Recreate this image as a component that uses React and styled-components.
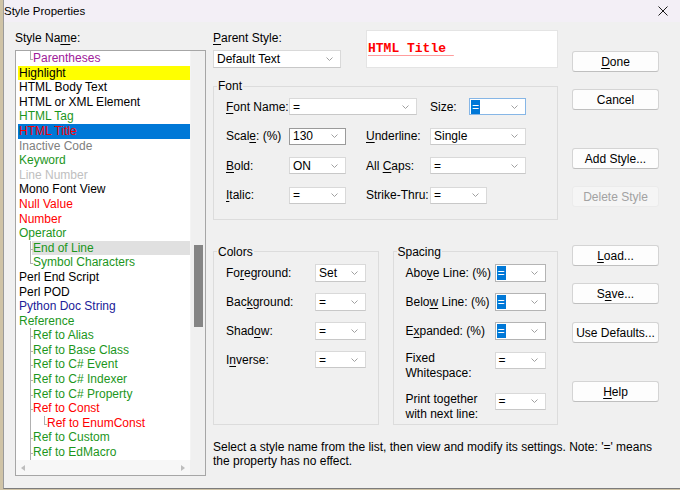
import styled, { createGlobalStyle } from "styled-components";

const GREEN = "#1c961c";
const RED = "#ff0000";
const PURPLE = "#a0209a";
const NAVY = "#202098";

const GlobalStyle = createGlobalStyle`
  html, body {
    margin: 0;
    padding: 0;
    background: #cfc3a6;
  }
  body {
    font-family: "Liberation Sans", Arial, sans-serif;
    font-size: 12px;
    color: #000;
  }
`;

const Window = styled.div`
  margin-left: 3px;
  width: 677px;
  height: 489px;
  box-sizing: border-box;
  border-left: 1px solid #9a9a9a;
  border-bottom: 1px solid #7c7c7c;
  background: #f0f0f0;
  display: flex;
  flex-direction: column;
`;

const TitleBar = styled.div`
  height: 22px;
  flex: none;
  background: #f3eff6;
  display: flex;
  align-items: center;
  font-size: 11.5px;
`;

const Close = styled.div`
  margin-left: auto;
  width: 34px;
  height: 22px;
  display: flex;
  align-items: center;
  justify-content: center;
`;

const Body = styled.div`
  flex: 1;
  display: flex;
  padding: 8px 21px 0 11px;
`;

const LeftCol = styled.div`
  width: 191px;
  flex: none;
  display: flex;
  flex-direction: column;
`;

const Caption = styled.div`
  line-height: 16px;
  height: 16px;
`;

const ListBox = styled.div`
  margin-top: 4px;
  height: 426px;
  box-sizing: border-box;
  border: 1px solid #a6a6a6;
  background: #fff;
  display: grid;
  grid-template-columns: 1fr 15px;
  grid-template-rows: 1fr 15px;
  overflow: hidden;
`;

const Rows = styled.div`
  overflow: hidden;
`;

const Row = styled.div`
  position: relative;
  height: 14.6px;
  padding-left: ${(p) => 2 + p.$level * 14}px;
`;

const RowLabel = styled.div`
  height: 100%;
  line-height: 14.6px;
  padding-left: 1px;
  white-space: nowrap;
  color: ${(p) => p.$color};
  background: ${(p) => p.$bg};
`;

const VLine = styled.span`
  position: absolute;
  left: ${(p) => p.$x}px;
  top: 0;
  width: 1px;
  height: ${(p) => (p.$half ? "55%" : "100%")};
  background: #b0b0b0;
`;

const HLine = styled.span`
  position: absolute;
  left: ${(p) => p.$x}px;
  top: 55%;
  width: 3px;
  height: 1px;
  background: #b0b0b0;
`;

const VScroll = styled.div`
  background: #f0f0f0;
  border-left: 1px solid #f4f4f4;
`;

const Thumb = styled.div`
  margin: 194px 0 0 3px;
  width: 9px;
  height: 82px;
  background: #858585;
`;

const HScroll = styled.div`
  background: #f7f7f7;
  display: flex;
  align-items: center;
  justify-content: space-between;
  padding: 0 5px;
`;

const Corner = styled.div`
  background: #f0f0f0;
`;

const Arrow = styled.span`
  width: 0;
  height: 0;
  border-top: 3.5px solid transparent;
  border-bottom: 3.5px solid transparent;
  ${(p) =>
    p.$dir === "left"
      ? "border-right: 4px solid #bdbdbd;"
      : "border-left: 4px solid #bdbdbd;"}
`;

const MidCol = styled.div`
  width: 345px;
  flex: none;
  margin-left: 7px;
  display: flex;
  flex-direction: column;
`;

const TopRow = styled.div`
  height: 38px;
  display: flex;
  justify-content: space-between;
`;

const ParentBlock = styled.div`
  display: flex;
  flex-direction: column;
`;

const Preview = styled.div`
  width: 192px;
  height: 38px;
  box-sizing: border-box;
  background: #fff;
  border: 1px solid #e4e4e4;
  padding: 10px 0 0 1px;
  font-family: "Liberation Mono", "Courier New", monospace;
  font-weight: bold;
  font-size: 13px;
  line-height: 16px;
  color: ${RED};
  white-space: pre;
`;

const PreviewText = styled.span`
  text-decoration: underline;
  text-decoration-color: #ff9c9c;
  text-decoration-thickness: 1px;
  text-underline-offset: 3px;
`;

const Group = styled.fieldset`
  margin: ${(p) => p.$mt || 0}px 0 0 0;
  padding: 0;
  border: 1px solid #dcdcdc;
  min-width: 0;
  flex: ${(p) => (p.$grow ? "1" : "none")};
`;

const Legend = styled.legend`
  margin-left: 3px;
  padding: 0 1px;
  line-height: 14px;
`;

const GroupBody = styled.div`
  display: flex;
  flex-direction: column;
  gap: ${(p) => p.$gap}px;
  padding: 5px 0 ${(p) => p.$pb}px 12px;
`;

const FormRow = styled.div`
  display: flex;
  align-items: ${(p) => (p.$top ? "flex-start" : "center")};
  height: ${(p) => p.$h}px;
`;

const Label = styled.span`
  width: ${(p) => p.$w}px;
  margin-left: ${(p) => p.$ml || 0}px;
  flex: none;
  line-height: ${(p) => (p.$multi ? "15px" : "16px")};
  white-space: nowrap;
`;

const Key = styled.u`
  text-decoration-thickness: 1px;
  text-underline-offset: 2px;
`;

const SelectBox = styled.div`
  width: ${(p) => p.$w}px;
  height: ${(p) => p.$h || 17}px;
  margin-top: ${(p) => p.$mt || 0}px;
  flex: none;
  box-sizing: border-box;
  background: #fff;
  border: 1px solid ${(p) => p.$border || "#d9d9d9"};
  border-bottom-color: ${(p) => p.$border || "#c8c8c8"};
  display: flex;
  align-items: center;
  padding: 0 7px 0 ${(p) => (p.$hl ? 1 : 3)}px;
`;

const Value = styled.span`
  flex: 1;
  white-space: nowrap;
  line-height: 14px;
`;

const HlValue = styled.span`
  display: inline-flex;
  align-items: center;
  justify-content: center;
  width: 9px;
  height: 14px;
  vertical-align: top;
  background: #0078d7;
  color: #fff;
`;

const Lower = styled.div`
  margin-top: 25px;
  display: flex;
  gap: 14px;
`;

const Note = styled.div`
  margin-top: 15px;
  line-height: 14px;
  white-space: nowrap;
`;

const RightCol = styled.div`
  width: 87px;
  flex: none;
  margin-left: 14px;
  display: flex;
  flex-direction: column;
`;

const Button = styled.button`
  margin-top: ${(p) => p.$space}px;
  width: 87px;
  height: 21px;
  padding: 0;
  box-sizing: border-box;
  font-family: inherit;
  font-size: 12px;
  color: ${(p) => (p.disabled ? "#a2a2a2" : "#000")};
  background: ${(p) => (p.disabled ? "#f5f5f5" : "#fdfdfd")};
  border: 1px solid ${(p) => (p.disabled ? "#ebebeb" : "#d4d4d4")};
  border-bottom-color: ${(p) => (p.disabled ? "#ebebeb" : "#bfbfbf")};
  border-radius: 3px;
`;

const Chevron = () => (
  <svg width="7" height="4" viewBox="0 0 7 4">
    <polyline points="0.5,0.5 3.5,3.5 6.5,0.5" fill="none" stroke="#a0a0a0" strokeWidth="1" />
  </svg>
);

const Select = ({ w, h, mt, value, hl, border }) => (
  <SelectBox $w={w} $h={h} $mt={mt} $hl={hl} $border={border}>
    <Value>{hl ? <HlValue>=</HlValue> : value}</Value>
    <Chevron />
  </SelectBox>
);

const items = [
  { t: "Parentheses", l: 1, c: PURPLE, last: true },
  { t: "Highlight", bg: "#ffff00" },
  { t: "HTML Body Text" },
  { t: "HTML or XML Element" },
  { t: "HTML Tag", c: GREEN },
  { t: "HTML Title", c: RED, bg: "#0078d7" },
  { t: "Inactive Code", c: "#808080" },
  { t: "Keyword", c: GREEN },
  { t: "Line Number", c: "#c0c0c0" },
  { t: "Mono Font View" },
  { t: "Null Value", c: RED },
  { t: "Number", c: RED },
  { t: "Operator", c: GREEN },
  { t: "End of Line", l: 1, c: GREEN, bg: "#e0e0e0" },
  { t: "Symbol Characters", l: 1, c: GREEN, last: true },
  { t: "Perl End Script" },
  { t: "Perl POD" },
  { t: "Python Doc String", c: NAVY },
  { t: "Reference", c: GREEN },
  { t: "Ref to Alias", l: 1, c: GREEN },
  { t: "Ref to Base Class", l: 1, c: GREEN },
  { t: "Ref to C# Event", l: 1, c: GREEN },
  { t: "Ref to C# Indexer", l: 1, c: GREEN },
  { t: "Ref to C# Property", l: 1, c: GREEN },
  { t: "Ref to Const", l: 1, c: RED },
  { t: "Ref to EnumConst", l: 2, c: RED, last: true, rails: [1] },
  { t: "Ref to Custom", l: 1, c: GREEN },
  { t: "Ref to EdMacro", l: 1, c: GREEN },
];

const StyleList = () => (
  <ListBox>
    <Rows>
      {items.map((it) => {
        const level = it.l || 0;
        return (
          <Row key={it.t} $level={level}>
            {(it.rails || []).map((r) => (
              <VLine key={r} $x={r * 14} />
            ))}
            {level > 0 && <VLine $x={level * 14} $half={it.last} />}
            {level > 0 && <HLine $x={level * 14} />}
            <RowLabel $color={it.c || "#000"} $bg={it.bg || "transparent"}>
              {it.t}
            </RowLabel>
          </Row>
        );
      })}
    </Rows>
    <VScroll>
      <Thumb />
    </VScroll>
    <HScroll>
      <Arrow $dir="left" />
      <Arrow $dir="right" />
    </HScroll>
    <Corner />
  </ListBox>
);

export default function App() {
  return (
    <>
      <GlobalStyle />
      <Window>
        <TitleBar>
          Style Properties
          <Close>
            <svg width="10" height="10" viewBox="0 0 10 10">
              <path d="M0.5 0.5 L9.5 9.5 M9.5 0.5 L0.5 9.5" stroke="#1a1a1a" strokeWidth="1" />
            </svg>
          </Close>
        </TitleBar>
        <Body>
          <LeftCol>
            <Caption>
              Style Na<Key>m</Key>e:
            </Caption>
            <StyleList />
          </LeftCol>

          <MidCol>
            <TopRow>
              <ParentBlock>
                <Caption>
                  <Key>P</Key>arent Style:
                </Caption>
                <Select w={128} h={18} mt={4} value="Default Text" />
              </ParentBlock>
              <Preview>
                <PreviewText>{"HTML Title "}</PreviewText>
              </Preview>
            </TopRow>

            <Group $mt={11}>
              <Legend>Font</Legend>
              <GroupBody $gap={12.5} $pb={15}>
                <FormRow $h={17}>
                  <Label $w={63}>
                    <Key>F</Key>ont Name:
                  </Label>
                  <Select w={128} value="=" />
                  <Label $w={39} $ml={13}>
                    Size:
                  </Label>
                  <Select w={57} hl border="#86b6e6" />
                </FormRow>
                <FormRow $h={17}>
                  <Label $w={63}>
                    Scal<Key>e</Key>: (%)
                  </Label>
                  <Select w={57} value="130" border="#9a9a9a" />
                  <Label $w={64} $ml={20}>
                    <Key>U</Key>nderline:
                  </Label>
                  <Select w={96} value="Single" />
                </FormRow>
                <FormRow $h={17}>
                  <Label $w={63}>
                    <Key>B</Key>old:
                  </Label>
                  <Select w={57} value="ON" />
                  <Label $w={64} $ml={20}>
                    All <Key>C</Key>aps:
                  </Label>
                  <Select w={96} value="=" />
                </FormRow>
                <FormRow $h={17}>
                  <Label $w={63}>
                    <Key>I</Key>talic:
                  </Label>
                  <Select w={57} value="=" />
                  <Label $w={64} $ml={20}>
                    Strike-Thru:
                  </Label>
                  <Select w={57} value="=" />
                </FormRow>
              </GroupBody>
            </Group>

            <Lower>
              <Group $grow>
                <Legend>Colors</Legend>
                <GroupBody $gap={11} $pb={2}>
                  <FormRow $h={18}>
                    <Label $w={89}>
                      Fo<Key>r</Key>eground:
                    </Label>
                    <Select w={51} h={18} value="Set" />
                  </FormRow>
                  <FormRow $h={18}>
                    <Label $w={89}>
                      Bac<Key>k</Key>ground:
                    </Label>
                    <Select w={51} h={18} value="=" />
                  </FormRow>
                  <FormRow $h={18}>
                    <Label $w={89}>
                      Shad<Key>o</Key>w:
                    </Label>
                    <Select w={51} h={18} value="=" />
                  </FormRow>
                  <FormRow $h={18}>
                    <Label $w={89}>
                      I<Key>n</Key>verse:
                    </Label>
                    <Select w={51} h={17} value="=" />
                  </FormRow>
                </GroupBody>
              </Group>

              <Group $grow>
                <Legend>Spacing</Legend>
                <GroupBody $gap={11} $pb={2}>
                  <FormRow $h={18}>
                    <Label $w={89}>
                      Abo<Key>v</Key>e Line: (%)
                    </Label>
                    <Select w={51} h={18} hl border="#b4b4b4" />
                  </FormRow>
                  <FormRow $h={18}>
                    <Label $w={89}>
                      Belo<Key>w</Key> Line: (%)
                    </Label>
                    <Select w={51} h={18} hl border="#b4b4b4" />
                  </FormRow>
                  <FormRow $h={18}>
                    <Label $w={89}>
                      E<Key>x</Key>panded: (%)
                    </Label>
                    <Select w={51} h={18} hl border="#b4b4b4" />
                  </FormRow>
                  <FormRow $h={30} $top>
                    <Label $w={89} $multi>
                      Fixed
                      <br />
                      Whitespace:
                    </Label>
                    <Select w={51} h={17} mt={1} value="=" />
                  </FormRow>
                  <FormRow $h={30} $top>
                    <Label $w={89} $multi>
                      Print together
                      <br />
                      with next line:
                    </Label>
                    <Select w={51} h={17} mt={1} value="=" />
                  </FormRow>
                </GroupBody>
              </Group>
            </Lower>

            <Note>
              Select a style name from the list, then view and modify its settings. Note: '=' means
              <br />
              the property has no effect.
            </Note>
          </MidCol>

          <RightCol>
            <Button $space={21}>
              <Key>D</Key>one
            </Button>
            <Button $space={17}>Cancel</Button>
            <Button $space={38}>Add Style...</Button>
            <Button $space={17} disabled>
              Delete Style
            </Button>
            <Button $space={38}>
              <Key>L</Key>oad...
            </Button>
            <Button $space={17}>
              S<Key>a</Key>ve...
            </Button>
            <Button $space={18}>Use Defaults...</Button>
            <Button $space={38}>
              <Key>H</Key>elp
            </Button>
          </RightCol>
        </Body>
      </Window>
    </>
  );
}
